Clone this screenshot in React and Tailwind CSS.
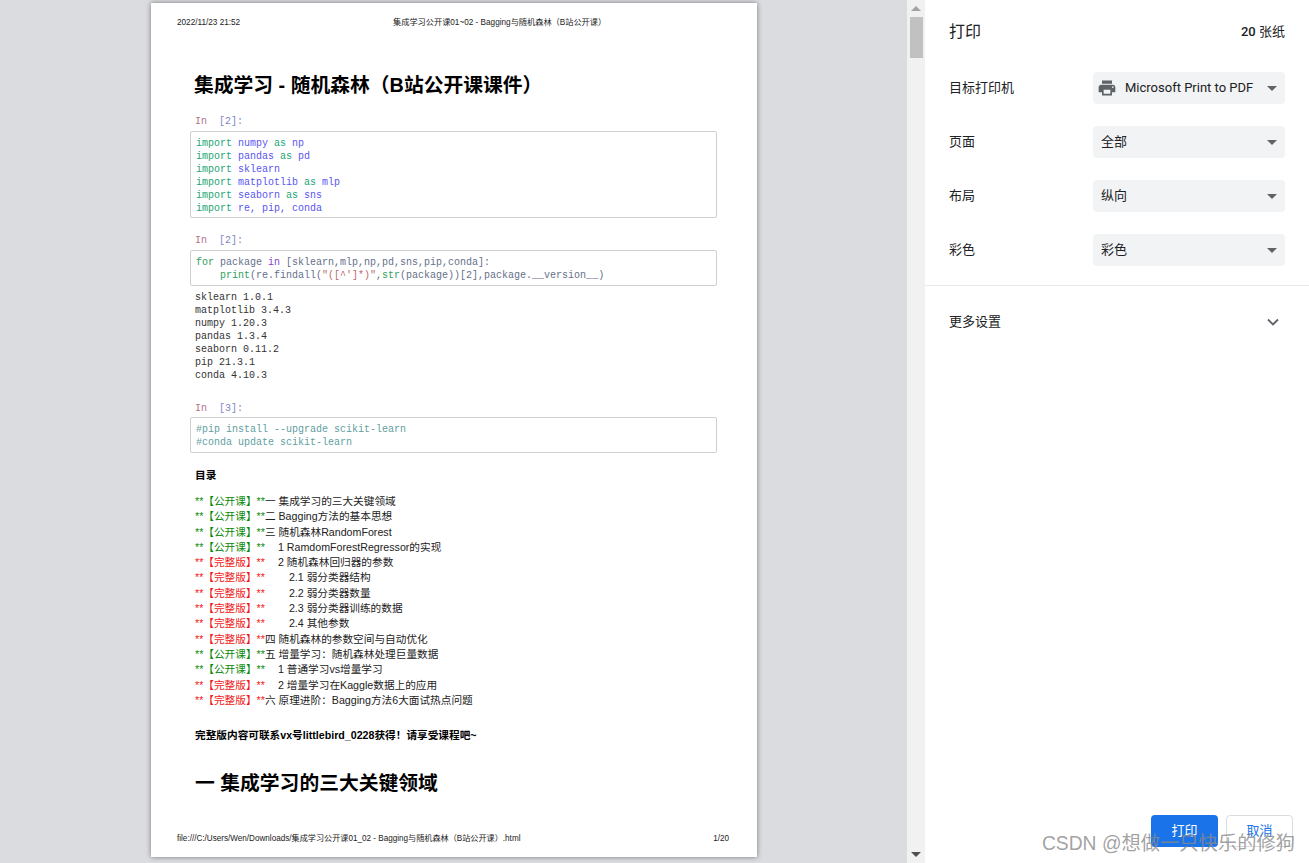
import React from 'react';

const SANS = 'font-["Liberation_Sans","Noto_Sans_CJK_SC",sans-serif]';
const UI = 'font-["Roboto","Noto_Sans_CJK_SC",sans-serif]';

const toc = [
  ['pub', '一 集成学习的三大关键领域', 0],
  ['pub', '二 Bagging方法的基本思想', 0],
  ['pub', '三 随机森林RandomForest', 0],
  ['pub', '1 RamdomForestRegressor的实现', 1],
  ['full', '2 随机森林回归器的参数', 1],
  ['full', '2.1 弱分类器结构', 2],
  ['full', '2.2 弱分类器数量', 2],
  ['full', '2.3 弱分类器训练的数据', 2],
  ['full', '2.4 其他参数', 2],
  ['full', '四 随机森林的参数空间与自动优化', 0],
  ['pub', '五 增量学习：随机森林处理巨量数据', 0],
  ['pub', '1 普通学习vs增量学习', 1],
  ['full', '2 增量学习在Kaggle数据上的应用', 1],
  ['full', '六 原理进阶：Bagging方法6大面试热点问题', 0],
];

const imports = [
  ['numpy', 'np'],
  ['pandas', 'pd'],
  ['sklearn'],
  ['matplotlib', 'mlp'],
  ['seaborn', 'sns'],
  ['re, pip, conda'],
];

const versions = ['matplotlib 3.4.3', 'numpy 1.20.3', 'pandas 1.3.4', 'seaborn 0.11.2', 'pip 21.3.1', 'conda 4.10.3'];

const Prompt = ({ n, className }) => (
  <div className={`h-[13px] ml-[44px] text-[10px] leading-[13px] whitespace-pre text-[#7d84c6] ${className}`}>
    <span className="text-[#b0748c]">In</span>  [{n}]:
  </div>
);

const CodeBox = ({ className, children }) => (
  <div className={`ml-[39px] w-[527px] border border-[#cfcfcf] rounded-[2px] px-[5px] text-[10px] leading-[13px] whitespace-pre ${className}`}>
    {children}
  </div>
);

const Kw = ({ children }) => <span className="text-[#22a574]">{children}</span>;
const Nm = ({ children }) => <span className="text-[#5a55f0]">{children}</span>;

const TocLine = ({ kind, text, level }) => {
  const pub = kind === 'pub';
  const color = pub ? 'text-[#0a8a0a]' : 'text-[#f01818]';
  const indent = level === 1 ? 'pl-[13px]' : level === 2 ? 'pl-[24px]' : '';
  return (
    <div className="h-[15.3px] leading-[15.3px] whitespace-pre text-[10.67px] text-[#222]">
      <span className={color}>**【{pub ? '公开课' : '完整版'}】**</span>
      <span className={indent}>{text}</span>
    </div>
  );
};

const Caret = () => (
  <svg width="10" height="5" viewBox="0 0 10 5" className="shrink-0">
    <path d="M0 0h10L5 5z" fill="#5f6368" />
  </svg>
);

const Select = ({ icon, children }) => (
  <div className={`w-[192px] h-[32px] rounded-[4px] bg-[#f1f3f4] flex items-center pr-[8px] ${icon ? 'pl-[4px]' : 'pl-[8px]'}`}>
    {icon && (
      <svg width="20" height="20" viewBox="0 0 24 24" fill="#5f6368" className="mr-[8px] shrink-0">
        <path d="M19 8H5c-1.66 0-3 1.34-3 3v6h4v4h12v-4h4v-6c0-1.66-1.34-3-3-3zm-3 11H8v-5h8v5zm3-7c-.55 0-1-.45-1-1s.45-1 1-1 1 .45 1 1-.45 1-1 1zm-1-9H6v4h12V3z" />
      </svg>
    )}
    <span className="flex-1 text-[13px] text-[#202124]">{children}</span>
    <Caret />
  </div>
);

const Row = ({ label, icon, value }) => (
  <div className="flex items-center justify-between h-[32px] mb-[22px]">
    <span className="text-[13px] text-[#202124]">{label}</span>
    <Select icon={icon}>{value}</Select>
  </div>
);

export default function App() {
  return (
    <div className={`relative flex h-screen overflow-hidden bg-white ${SANS}`}>
      <div className="w-[907px] shrink-0 bg-[#dadce0] pt-[3px] pl-[151px]">
        <div className="w-[606px] h-[854px] bg-white flex flex-col shadow-[0_0_5px_rgba(0,0,0,0.45)]">
          <div className="flex pt-[15px] pl-[26px] h-[24px] text-[8.2px] leading-[10px] text-[#222]">
            <span className="w-[216px]">2022/11/23 21:52</span>
            <span>集成学习公开课01~02 - Bagging与随机森林（B站公开课）</span>
          </div>
          <h1 className="mt-[45px] ml-[43px] h-[26px] text-[19.8px] leading-[26px] font-bold text-black">集成学习 - 随机森林（B站公开课课件）</h1>

          <div className='font-["Liberation_Mono",monospace]'>
            <Prompt n={2} className="mt-[17px]" />
            <CodeBox className="mt-[3px] pt-[5px] pb-[2px]">
              {imports.map(([mod, alias]) => (
                <div key={mod}>
                  <Kw>import</Kw> <Nm>{mod}</Nm>
                  {alias && <> <Kw>as</Kw> <Nm>{alias}</Nm></>}
                </div>
              ))}
            </CodeBox>

            <Prompt n={2} className="mt-[16px]" />
            <CodeBox className="mt-[3px] pt-[5px] pb-[3px] text-[#66708a]">
              <div>
                <span className="text-[#2e9e5c]">for</span> package <span className="text-[#8a3fd0]">in</span> [sklearn,mlp,np,pd,sns,pip,conda]:
              </div>
              <div>
                {'    '}<span className="text-[#2e9e5c]">print</span>(re.findall(<span className="text-[#c06a6a]">"([^']*)"</span>,<span className="text-[#2e9e5c]">str</span>(package))[2],package.__version__)
              </div>
            </CodeBox>

            <div className="mt-[5px] ml-[44px] text-[10px] leading-[13px] whitespace-pre text-[#333]">
              <div className="h-[9px] mb-[4px] overflow-hidden">sklearn 1.0.1</div>
              {versions.map((v) => <div key={v}>{v}</div>)}
            </div>

            <Prompt n={3} className="mt-[20px]" />
            <CodeBox className="mt-[2px] pt-[5px] pb-[3px] text-[#5f9ea0]">
              <div>#pip install --upgrade scikit-learn</div>
              <div>#conda update scikit-learn</div>
            </CodeBox>
          </div>

          <div className="mt-[15px] ml-[44px] h-[14px] text-[10.67px] leading-[14px] font-bold text-black">目录</div>
          <div className="mt-[12px] ml-[44px]">
            {toc.map(([kind, text, level]) => <TocLine key={text} kind={kind} text={text} level={level} />)}
          </div>
          <div className="mt-[20px] ml-[44px] h-[14px] text-[10.67px] leading-[14px] font-bold text-black">完整版内容可联系vx号littlebird_0228获得！请享受课程吧~</div>
          <h2 className="mt-[28px] ml-[44px] h-[26px] text-[19.8px] leading-[26px] font-bold text-black">一 集成学习的三大关键领域</h2>

          <div className="mt-auto mb-[13px] flex justify-between pl-[26px] pr-[28px] text-[8.15px] leading-[10px] text-[#222]">
            <span>file:///C:/Users/Wen/Downloads/集成学习公开课01_02 - Bagging与随机森林（B站公开课）.html</span>
            <span>1/20</span>
          </div>
        </div>
      </div>

      <div className="w-[18px] shrink-0 bg-[#f1f1f1] flex flex-col items-center">
        <svg width="10" height="5" viewBox="0 0 10 5" className="mt-[6px]"><path d="M0 5h10L5 0z" fill="#a3a3a3" /></svg>
        <div className="mt-[6px] w-[13px] h-[41px] bg-[#c1c1c1]" />
        <svg width="10" height="5" viewBox="0 0 10 5" className="mt-auto mb-[6px]"><path d="M0 0h10L5 5z" fill="#505050" /></svg>
      </div>

      <div className={`flex-1 flex flex-col ${UI}`}>
        <div className="flex items-center justify-between px-[24px] pt-[22px] h-[72px] pb-[30px]">
          <span className="text-[16px] text-[#202124]">打印</span>
          <span className="text-[13px] text-[#202124]"><span className="font-medium">20</span> 张纸</span>
        </div>
        <div className="px-[24px]">
          <Row label="目标打印机" icon value="Microsoft Print to PDF" />
          <Row label="页面" value="全部" />
          <Row label="布局" value="纵向" />
          <Row label="彩色" value="彩色" />
        </div>
        <div className="-mt-[3px] h-px bg-[#e8eaed]" />
        <div className="mt-[20px] h-[32px] pl-[24px] pr-[30px] flex items-center justify-between">
          <span className="text-[13px] text-[#202124]">更多设置</span>
          <svg width="12" height="8" viewBox="0 0 12 8" fill="none" stroke="#5f6368" strokeWidth="1.8">
            <path d="M1 1.5l5 5 5-5" />
          </svg>
        </div>
        <div className="mt-auto mb-[16px] pr-[16px] flex justify-end gap-[8px]">
          <button className="w-[67px] h-[32px] rounded-[4px] bg-[#1a73e8] text-[13px] text-white">打印</button>
          <button className="w-[67px] h-[32px] rounded-[4px] border border-[#dadce0] bg-white text-[13px] text-[#1a73e8]">取消</button>
        </div>
      </div>

      <div className='absolute right-[14px] bottom-[7px] text-[19.3px] leading-[24px] whitespace-nowrap text-[#8a8a8a]/80 font-["Liberation_Sans","Noto_Sans_CJK_SC",sans-serif]'>
        CSDN @想做一只快乐的修狗
      </div>
    </div>
  );
}
